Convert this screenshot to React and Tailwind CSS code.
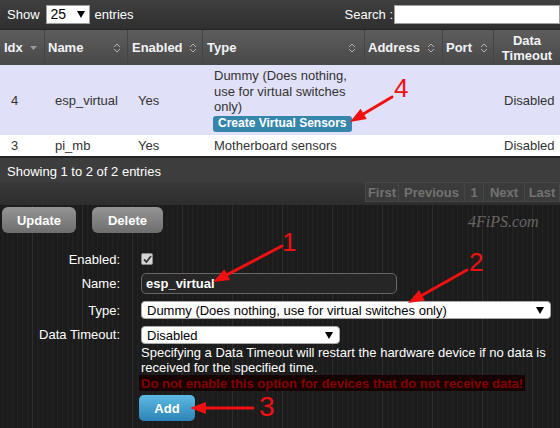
import React from "react";

const SortIcon = () => (
  <svg width="8" height="12" viewBox="0 0 8 12" className="shrink-0">
    <path d="M1 5 L4 2 L7 5 M1 7 L4 10 L7 7" fill="none" stroke="#b4b4b4" strokeWidth="1" />
  </svg>
);

const DownTri = () => (
  <svg width="7" height="4" viewBox="0 0 7 4" className="shrink-0">
    <path d="M0 0 L7 0 L3.5 4 Z" fill="#9a9a9a" />
  </svg>
);

const SelArrow = () => (
  <svg width="8" height="7" viewBox="0 0 8 7" className="shrink-0">
    <path d="M0 0 L8 0 L4 7 Z" fill="#000" />
  </svg>
);

function Arrow({ x1, y1, bx, by, p1, p2, tip }) {
  return (
    <g>
      <line x1={x1} y1={y1} x2={bx} y2={by} stroke="#f01010" strokeWidth="3" strokeLinecap="round" />
      <polygon points={`${tip[0]},${tip[1]} ${p1[0]},${p1[1]} ${p2[0]},${p2[1]}`} fill="#f01010" />
    </g>
  );
}

export default function App() {
  const headCell = "flex items-center justify-between border-r border-[#454545]";
  return (
    <div className="relative w-[560px] h-[428px] overflow-hidden text-[13px] leading-[15px] font-['Liberation_Sans',Arial,sans-serif] bg-[#1c1c1c] bg-[repeating-linear-gradient(90deg,transparent_0px,transparent_32px,rgba(255,255,255,0.05)_32px,rgba(255,255,255,0.05)_33px,transparent_33px,transparent_50px),repeating-linear-gradient(90deg,#1b1b1b_0px,#1b1b1b_2px,#222222_2px,#222222_3px,#1d1d1d_3px,#1d1d1d_5px)]">
      {/* top bar */}
      <div className="h-[30px] flex items-center justify-between bg-linear-to-b from-[#3f3f3f] to-[#2f2f2f] border-b border-[#232323] text-white">
        <div className="flex items-center pl-[7px]">
          <span>Show</span>
          <div className="ml-[6px] w-[44px] h-[19px] bg-white border border-[#a0a0a0] flex items-center justify-between pl-[4px] pr-[4px] text-black">
            <span className="text-[14px]">25</span>
            <SelArrow />
          </div>
          <span className="ml-[5px]">entries</span>
        </div>
        <div className="flex items-center">
          <span>Search :</span>
          <div className="ml-[1px] w-[166px] h-[19px] bg-white border border-[#a0a0a0]" />
        </div>
      </div>

      {/* header */}
      <div className="grid grid-cols-[45px_83px_75px_162px_78px_51px_66px] h-[35px] bg-linear-to-b from-[#5d5d5d] to-[#484848] text-[#f2f2f8] font-bold">
        <div className={`${headCell} pl-[4px] pr-[7px]`}>
          <span>Idx</span>
          <DownTri />
        </div>
        <div className={`${headCell} pl-[3px] pr-[6px]`}>
          <span>Name</span>
          <SortIcon />
        </div>
        <div className={`${headCell} pl-[4px] pr-[5px]`}>
          <span>Enabled</span>
          <SortIcon />
        </div>
        <div className={`${headCell} pl-[4px] pr-[8px]`}>
          <span>Type</span>
          <SortIcon />
        </div>
        <div className={`${headCell} pl-[3px] pr-[7px]`}>
          <span>Address</span>
          <SortIcon />
        </div>
        <div className={`${headCell} pl-[3px] pr-[5px]`}>
          <span>Port</span>
          <SortIcon />
        </div>
        <div className="flex items-center justify-center text-center leading-[15px]">
          <span>
            Data
            <br />
            Timeout
          </span>
        </div>
      </div>

      {/* row 1 */}
      <div className="grid grid-cols-[45px_83px_75px_162px_78px_51px_66px] h-[70px] bg-[#e0e0f8] text-[#333]">
        <div className="flex items-center pl-[11px]">4</div>
        <div className="flex items-center pl-[10px]">esp_virtual</div>
        <div className="flex items-center pl-[10px]">Yes</div>
        <div className="flex flex-col justify-center pl-[11px]">
          <div className="whitespace-nowrap leading-[15.5px]">
            Dummy (Does nothing,
            <br />
            use for virtual switches
            <br />
            only)
          </div>
          <div className="mt-[1px] -ml-[1px] w-fit h-[16px] px-[5px] flex items-center rounded-[3px] bg-[#3686ac] text-white text-[12px] font-bold whitespace-nowrap">
            Create Virtual Sensors
          </div>
        </div>
        <div />
        <div />
        <div className="flex items-center pl-[10px]">Disabled</div>
      </div>

      {/* row 2 */}
      <div className="grid grid-cols-[45px_83px_75px_162px_78px_51px_66px] h-[21px] bg-white text-[#333]">
        <div className="flex items-center pl-[11px]">3</div>
        <div className="flex items-center pl-[10px]">pi_mb</div>
        <div className="flex items-center pl-[10px]">Yes</div>
        <div className="flex items-center pl-[11px] whitespace-nowrap">Motherboard sensors</div>
        <div />
        <div />
        <div className="flex items-center pl-[10px]">Disabled</div>
      </div>

      {/* footer */}
      <div className="h-[49px] border-t-2 border-[#232323] flex flex-col">
        <div className="h-[24px] flex items-center pt-[3px] pl-[7px] text-white bg-[#3d3d3d]">
          Showing 1 to 2 of 2 entries
        </div>
        <div className="flex-1 bg-linear-to-b from-[#393939] to-[#2d2d2d] flex justify-end items-start">
          <div className="flex h-[20px] font-bold text-[#727272]">
            {[
              ["First", "w-[34px]"],
              ["Previous", "w-[67px]"],
              ["1", "w-[20px]"],
              ["Next", "w-[42px]"],
              ["Last", "w-[36px]"],
            ].map(([t, w]) => (
              <div key={t} className={`${w} flex items-center justify-center border border-[#474747] bg-[#3b3b3b] -ml-[1px]`}>
                {t}
              </div>
            ))}
          </div>
        </div>
      </div>

      {/* Update / Delete */}
      <div className="flex mt-[2px] pl-[2px] gap-[16px]">
        <div className="w-[74px] h-[26px] rounded-[6px] bg-linear-to-b from-[#959595] to-[#6e6e6e] text-white font-bold flex items-center justify-center">
          Update
        </div>
        <div className="w-[71px] h-[26px] rounded-[6px] bg-linear-to-b from-[#959595] to-[#6e6e6e] text-white font-bold flex items-center justify-center">
          Delete
        </div>
      </div>

      {/* form */}
      <div className="flex flex-col pt-[19px] text-white">
        <div className="flex items-center h-[14px]">
          <div className="w-[120px] text-right">Enabled:</div>
          <div className="ml-[21px] w-[12px] h-[12px] rounded-[2px] bg-[#d6d6d6] border border-[#8a8a8a] flex items-center justify-center">
            <svg width="9" height="8" viewBox="0 0 9 8">
              <path d="M1 4.5 L3.5 7 L8 1" fill="none" stroke="#3a3a3a" strokeWidth="1.8" />
            </svg>
          </div>
        </div>
        <div className="flex items-center h-[21px] mt-[7px]">
          <div className="w-[120px] text-right">Name:</div>
          <div className="ml-[21px] w-[256px] h-[21px] rounded-[5px] bg-[#262626] border border-[#666] flex items-center pl-[4px] font-bold">
            esp_virtual
          </div>
        </div>
        <div className="flex items-center h-[18px] mt-[7px]">
          <div className="w-[120px] text-right">Type:</div>
          <div className="ml-[21px] w-[410px] h-[18px] rounded-[4px] bg-white border border-[#aaa] flex items-center justify-between pl-[5px] pr-[6px] text-black whitespace-nowrap">
            <span>Dummy (Does nothing, use for virtual switches only)</span>
            <SelArrow />
          </div>
        </div>
        <div className="flex items-start mt-[7px]">
          <div className="w-[120px] text-right leading-[18px]">Data Timeout:</div>
          <div className="ml-[21px] flex flex-col">
            <div className="w-[199px] h-[18px] rounded-[4px] bg-white border border-[#aaa] flex items-center justify-between pl-[5px] pr-[6px] text-black">
              <span>Disabled</span>
              <SelArrow />
            </div>
            <div className="mt-[1px] leading-[15px] whitespace-nowrap">
              Specifying a Data Timeout will restart the hardware device if no data is
              <br />
              received for the specified time.
            </div>
            <div className="-ml-[2px] w-fit h-[16px] px-[2px] flex items-center bg-[#160202] text-[#840000] font-bold whitespace-nowrap">
              Do not enable this option for devices that do not receive data!
            </div>
            <div className="-ml-[2px] mt-[4px] w-[56px] h-[26px] rounded-[5px] bg-linear-to-b from-[#5dbbe2] to-[#2c83b8] text-white font-bold flex items-center justify-center">
              Add
            </div>
          </div>
        </div>
      </div>

      {/* watermark */}
      <div className="absolute left-[468px] top-[214px] text-[16px] italic text-[#666] font-['Liberation_Serif',serif]">
        4FiPS.com
      </div>

      {/* annotations */}
      <svg className="absolute inset-0 pointer-events-none" width="560" height="428" viewBox="0 0 560 428">
        <Arrow x1={282} y1={246} bx={227.2} by={274.6} tip={[213, 282]} p1={[230.0, 279.9]} p2={[224.4, 269.3]} />
        <Arrow x1={467} y1={270} bx={422} by={295.2} tip={[408, 303]} p1={[424.9, 300.4]} p2={[419.1, 290.0]} />
        <Arrow x1={253} y1={408} bx={206} by={408} tip={[190, 408]} p1={[206, 402]} p2={[206, 414]} />
        <Arrow x1={392} y1={97} bx={363.7} by={113.8} tip={[350, 122]} p1={[366.8, 119.0]} p2={[360.6, 108.7]} />
      </svg>
      <div className="absolute left-[282px] top-[229px] text-[26px] leading-[26px] text-[#f01010]">1</div>
      <div className="absolute left-[469px] top-[249px] text-[26px] leading-[26px] text-[#f01010]">2</div>
      <div className="absolute left-[259px] top-[393px] text-[28px] leading-[28px] text-[#f01010]">3</div>
      <div className="absolute left-[394px] top-[75px] text-[26px] leading-[26px] text-[#f01010]">4</div>
    </div>
  );
}
